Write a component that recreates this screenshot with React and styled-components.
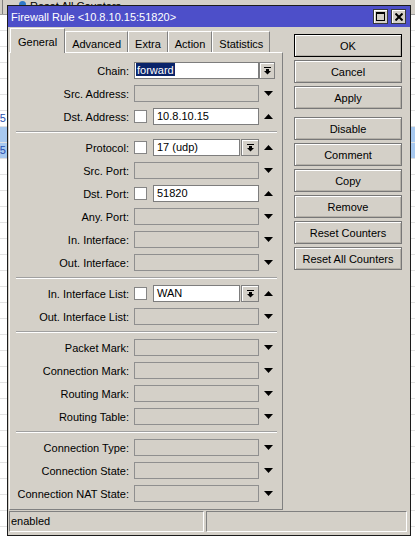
import React from "react"
import styled, { createGlobalStyle } from "styled-components"

const GlobalStyle = createGlobalStyle`
  html, body {
    margin: 0;
    padding: 0;
  }
  body {
    font-family: "Liberation Sans", Arial, sans-serif;
    font-size: 11px;
    color: #000;
    background: #fff;
  }
`

const Desktop = styled.div`
  position: relative;
  width: 415px;
  height: 540px;
  overflow: hidden;
  background: #fff;
`

/* the list window behind the dialog */
const BackToolbar = styled.div`
  height: 14px;
  background: #d4d0c8;
  border-bottom: 1px solid #a0a0a0;
  display: flex;
  padding-left: 2px;
`

const BackButton = styled.div`
  display: flex;
  align-items: flex-start;
  gap: 4px;
  height: 14px;
  box-sizing: border-box;
  padding: 0 8px 0 16px;
  border-left: 1px solid #808080;
  line-height: 12px;
  color: #000;
`

const BackIcon = styled.span`
  width: 7px;
  height: 7px;
  margin-top: 1px;
  border-radius: 50%;
  background: #2f78c8;
`

const BackRow = styled.div`
  height: 16px;
  box-sizing: border-box;
  border-bottom: 1px solid #e2e2e2;
  background: ${(p) => (p.$selected ? "#a8c9f0" : "#fff")};
  display: flex;
  align-items: center;
  color: #2850b0;
  line-height: 15px;
`

const BackCell = styled.div`
  width: 6px;
  display: flex;
  justify-content: flex-end;
  overflow: hidden;
  white-space: nowrap;
`

/* dialog */
const Dialog = styled.div`
  position: absolute;
  left: 7px;
  top: 5px;
  width: 404px;
  height: 531px;
  box-sizing: border-box;
  border: 1px solid #1c1c1c;
  background: #d4d0c8;
  display: flex;
  flex-direction: column;
`

const TitleBar = styled.div`
  height: 21px;
  flex: none;
  background: #4d4fc9;
  color: #fff;
  display: flex;
  align-items: center;
  justify-content: space-between;
  padding: 0 4px 0 3px;
`

const TitleButtons = styled.div`
  display: flex;
  gap: 3px;
`

const TitleButton = styled.div`
  width: 15px;
  height: 15px;
  box-sizing: border-box;
  background: #d4d0c8;
  border: 1px solid #3a3a3a;
  box-shadow: inset 1px 1px 0 #fff;
  display: flex;
  align-items: center;
  justify-content: center;
`

const Body = styled.div`
  display: flex;
  padding: 1px 0 0 1px;
  height: 483px;
  box-sizing: border-box;
`

const LeftCol = styled.div`
  width: 274px;
  display: flex;
  flex-direction: column;
`

const TabStrip = styled.div`
  height: 24px;
  display: flex;
  align-items: flex-end;
  padding-left: 1px;
  position: relative;
  z-index: 1;
`

const Tab = styled.div`
  height: ${(p) => (p.$active ? 25 : 21)}px;
  margin-bottom: ${(p) => (p.$active ? -1 : 0)}px;
  box-sizing: border-box;
  padding: ${(p) => (p.$active ? "7px 7px 0" : "6px 6px 0")};
  background: #d4d0c8;
  border-left: 1px solid #fff;
  border-top: 1px solid #fff;
  border-right: 1px solid #808080;
  line-height: 13px;
  white-space: nowrap;
`

const Panel = styled.div`
  height: 458px;
  box-sizing: border-box;
  border-left: 1px solid #fff;
  border-top: 1px solid #fff;
  border-right: 1px solid #808080;
  border-bottom: 1px solid #808080;
  padding-top: 6px;
  display: flex;
  flex-direction: column;
`

const Row = styled.div`
  height: 23px;
  display: flex;
  align-items: center;
`

const Label = styled.div`
  width: 119px;
  margin-right: 5px;
  text-align: right;
  white-space: nowrap;
`

const Field = styled.div`
  width: 125px;
  height: 17px;
  display: flex;
  align-items: center;
`

const Trailing = styled.div`
  width: 18px;
  height: 17px;
  display: flex;
  align-items: center;
  padding-left: ${(p) => (p.$button ? 0 : 5)}px;
  box-sizing: border-box;
`

const Disabled = styled.div`
  width: 100%;
  height: 17px;
  box-sizing: border-box;
  border: 1px solid #8f8f8f;
  background: #d4d0c8;
`

const Check = styled.div`
  width: 13px;
  height: 13px;
  flex: none;
  box-sizing: border-box;
  border: 1px solid #858585;
  background: #fff;
  margin-right: 6px;
`

const Input = styled.div`
  flex: 1;
  height: 17px;
  box-sizing: border-box;
  border: 1px solid #7d7d7d;
  background: #fff;
  padding-left: ${(p) => p.$pad ?? 3}px;
  line-height: 15px;
  white-space: nowrap;
  overflow: hidden;
`

const Selected = styled.span`
  background: #0a246a;
  color: #fff;
  padding: 1px 1px 0;
`

const DropButton = styled.div`
  width: ${(p) => p.$w || 18}px;
  height: 17px;
  flex: none;
  margin-left: ${(p) => p.$gap || 0}px;
  box-sizing: border-box;
  border: 1px solid #808080;
  background: #d4d0c8;
  box-shadow: inset 1px 1px 0 #fff;
  display: flex;
  align-items: center;
  justify-content: center;
`

const Separator = styled.div`
  height: 8px;
  margin-left: 6px;
  width: 261px;
  display: flex;
  align-items: center;
  &::after {
    content: "";
    width: 100%;
    height: 0;
    border-top: 1px solid #a0a0a0;
    border-bottom: 1px solid #fff;
  }
`

const RightCol = styled.div`
  width: 108px;
  margin-left: 11px;
  padding-top: 6px;
  display: flex;
  flex-direction: column;
  gap: 3px;
`

const Button = styled.div`
  height: 23px;
  flex: none;
  box-sizing: border-box;
  border: 1px solid ${(p) => (p.$default ? "#000" : "#777")};
  box-shadow: inset 1px 1px 0 #fff, inset -1px -1px 0 #b5b1a9;
  margin-top: ${(p) => (p.$spaced ? 5 : 0)}px;
  display: flex;
  align-items: center;
  justify-content: center;
  white-space: nowrap;
`

const StatusBar = styled.div`
  margin-top: 1px;
  height: 21px;
  display: flex;
  gap: 2px;
  padding: 0 3px 0 1px;
`

const StatusCell = styled.div`
  width: ${(p) => (p.$w ? `${p.$w}px` : "auto")};
  flex: ${(p) => (p.$w ? "none" : 1)};
  box-sizing: border-box;
  border-top: 1px solid #808080;
  border-left: 1px solid #808080;
  border-right: 1px solid #fff;
  border-bottom: 1px solid #fff;
  padding-left: 1px;
  line-height: 19px;
`

const ArrowDown = () => (
  <svg width="9" height="5" viewBox="0 0 9 5">
    <polygon points="0,0 9,0 4.5,5" fill="#000" />
  </svg>
)

const ArrowUp = () => (
  <svg width="9" height="5" viewBox="0 0 9 5">
    <polygon points="0,5 9,5 4.5,0" fill="#000" />
  </svg>
)

const DropIcon = () => (
  <svg width="7" height="8" viewBox="0 0 7 8">
    <rect x="0" y="0" width="7" height="1" fill="#000" />
    <rect x="2" y="2" width="3" height="2" fill="#000" />
    <polygon points="0,4 7,4 3.5,7.5" fill="#000" />
  </svg>
)

const MaxIcon = () => (
  <svg width="9" height="9" viewBox="0 0 9 9">
    <rect x="0.5" y="0.5" width="8" height="8" fill="none" stroke="#000" />
    <rect x="0" y="0" width="9" height="2" fill="#000" />
  </svg>
)

const CloseIcon = () => (
  <svg width="8" height="8" viewBox="0 0 8 8">
    <path d="M0.5 0.5 L7.5 7.5 M7.5 0.5 L0.5 7.5" stroke="#000" strokeWidth="2" />
  </svg>
)

const Arrow = ({ up }) => <Trailing>{up ? <ArrowUp /> : <ArrowDown />}</Trailing>

const sections = [
  [
    { label: "Chain:", kind: "chain" },
    { label: "Src. Address:" },
    { label: "Dst. Address:", kind: "check", value: "10.8.10.15", up: true },
  ],
  [
    { label: "Protocol:", kind: "checkcombo", value: "17 (udp)", up: true },
    { label: "Src. Port:" },
    { label: "Dst. Port:", kind: "check", value: "51820", up: true },
    { label: "Any. Port:" },
    { label: "In. Interface:" },
    { label: "Out. Interface:" },
  ],
  [
    { label: "In. Interface List:", kind: "checkcombo", value: "WAN", up: true },
    { label: "Out. Interface List:" },
  ],
  [
    { label: "Packet Mark:" },
    { label: "Connection Mark:" },
    { label: "Routing Mark:" },
    { label: "Routing Table:" },
  ],
  [
    { label: "Connection Type:" },
    { label: "Connection State:" },
    { label: "Connection NAT State:" },
  ],
]

const FormRow = ({ label, kind, value, up }) => {
  if (kind === "chain") {
    return (
      <Row>
        <Label>{label}</Label>
        <Field>
          <Input $pad={1}>
            <Selected>forward</Selected>
          </Input>
        </Field>
        <Trailing $button>
          <DropButton $w={16}>
            <DropIcon />
          </DropButton>
        </Trailing>
      </Row>
    )
  }
  if (kind === "check" || kind === "checkcombo") {
    return (
      <Row>
        <Label>{label}</Label>
        <Field>
          <Check />
          <Input>{value}</Input>
          {kind === "checkcombo" && (
            <DropButton $gap={1}>
              <DropIcon />
            </DropButton>
          )}
        </Field>
        <Arrow up={up} />
      </Row>
    )
  }
  return (
    <Row>
      <Label>{label}</Label>
      <Field>
        <Disabled />
      </Field>
      <Arrow />
    </Row>
  )
}

const tabs = ["General", "Advanced", "Extra", "Action", "Statistics"]

const buttons = [
  { text: "OK", def: true },
  { text: "Cancel" },
  { text: "Apply" },
  { text: "Disable", spaced: true },
  { text: "Comment" },
  { text: "Copy" },
  { text: "Remove" },
  { text: "Reset Counters" },
  { text: "Reset All Counters" },
]

const backRows = Array.from({ length: 33 }, (_, i) => ({
  selected: i === 7 || i === 8,
  text: i === 6 || i === 8 ? "10.8.10.15" : "",
}))

export default function App() {
  return (
    <Desktop>
      <GlobalStyle />
      <BackToolbar>
        <BackButton>
          <BackIcon />
          Reset All Counters
        </BackButton>
      </BackToolbar>
      {backRows.map((r, i) => (
        <BackRow key={i} $selected={r.selected}>
          <BackCell>{r.text}</BackCell>
        </BackRow>
      ))}

      <Dialog>
        <TitleBar>
          <span>Firewall Rule &lt;10.8.10.15:51820&gt;</span>
          <TitleButtons>
            <TitleButton>
              <MaxIcon />
            </TitleButton>
            <TitleButton>
              <CloseIcon />
            </TitleButton>
          </TitleButtons>
        </TitleBar>

        <Body>
          <LeftCol>
            <TabStrip>
              {tabs.map((t, i) => (
                <Tab key={t} $active={i === 0}>
                  {t}
                </Tab>
              ))}
            </TabStrip>
            <Panel>
              {sections.map((rows, si) => (
                <React.Fragment key={si}>
                  {si > 0 && <Separator />}
                  {rows.map((r) => (
                    <FormRow key={r.label} {...r} />
                  ))}
                </React.Fragment>
              ))}
            </Panel>
          </LeftCol>

          <RightCol>
            {buttons.map((b) => (
              <Button key={b.text} $default={b.def} $spaced={b.spaced}>
                {b.text}
              </Button>
            ))}
          </RightCol>
        </Body>

        <StatusBar>
          <StatusCell $w={195}>enabled</StatusCell>
          <StatusCell />
        </StatusBar>
      </Dialog>
    </Desktop>
  )
}
